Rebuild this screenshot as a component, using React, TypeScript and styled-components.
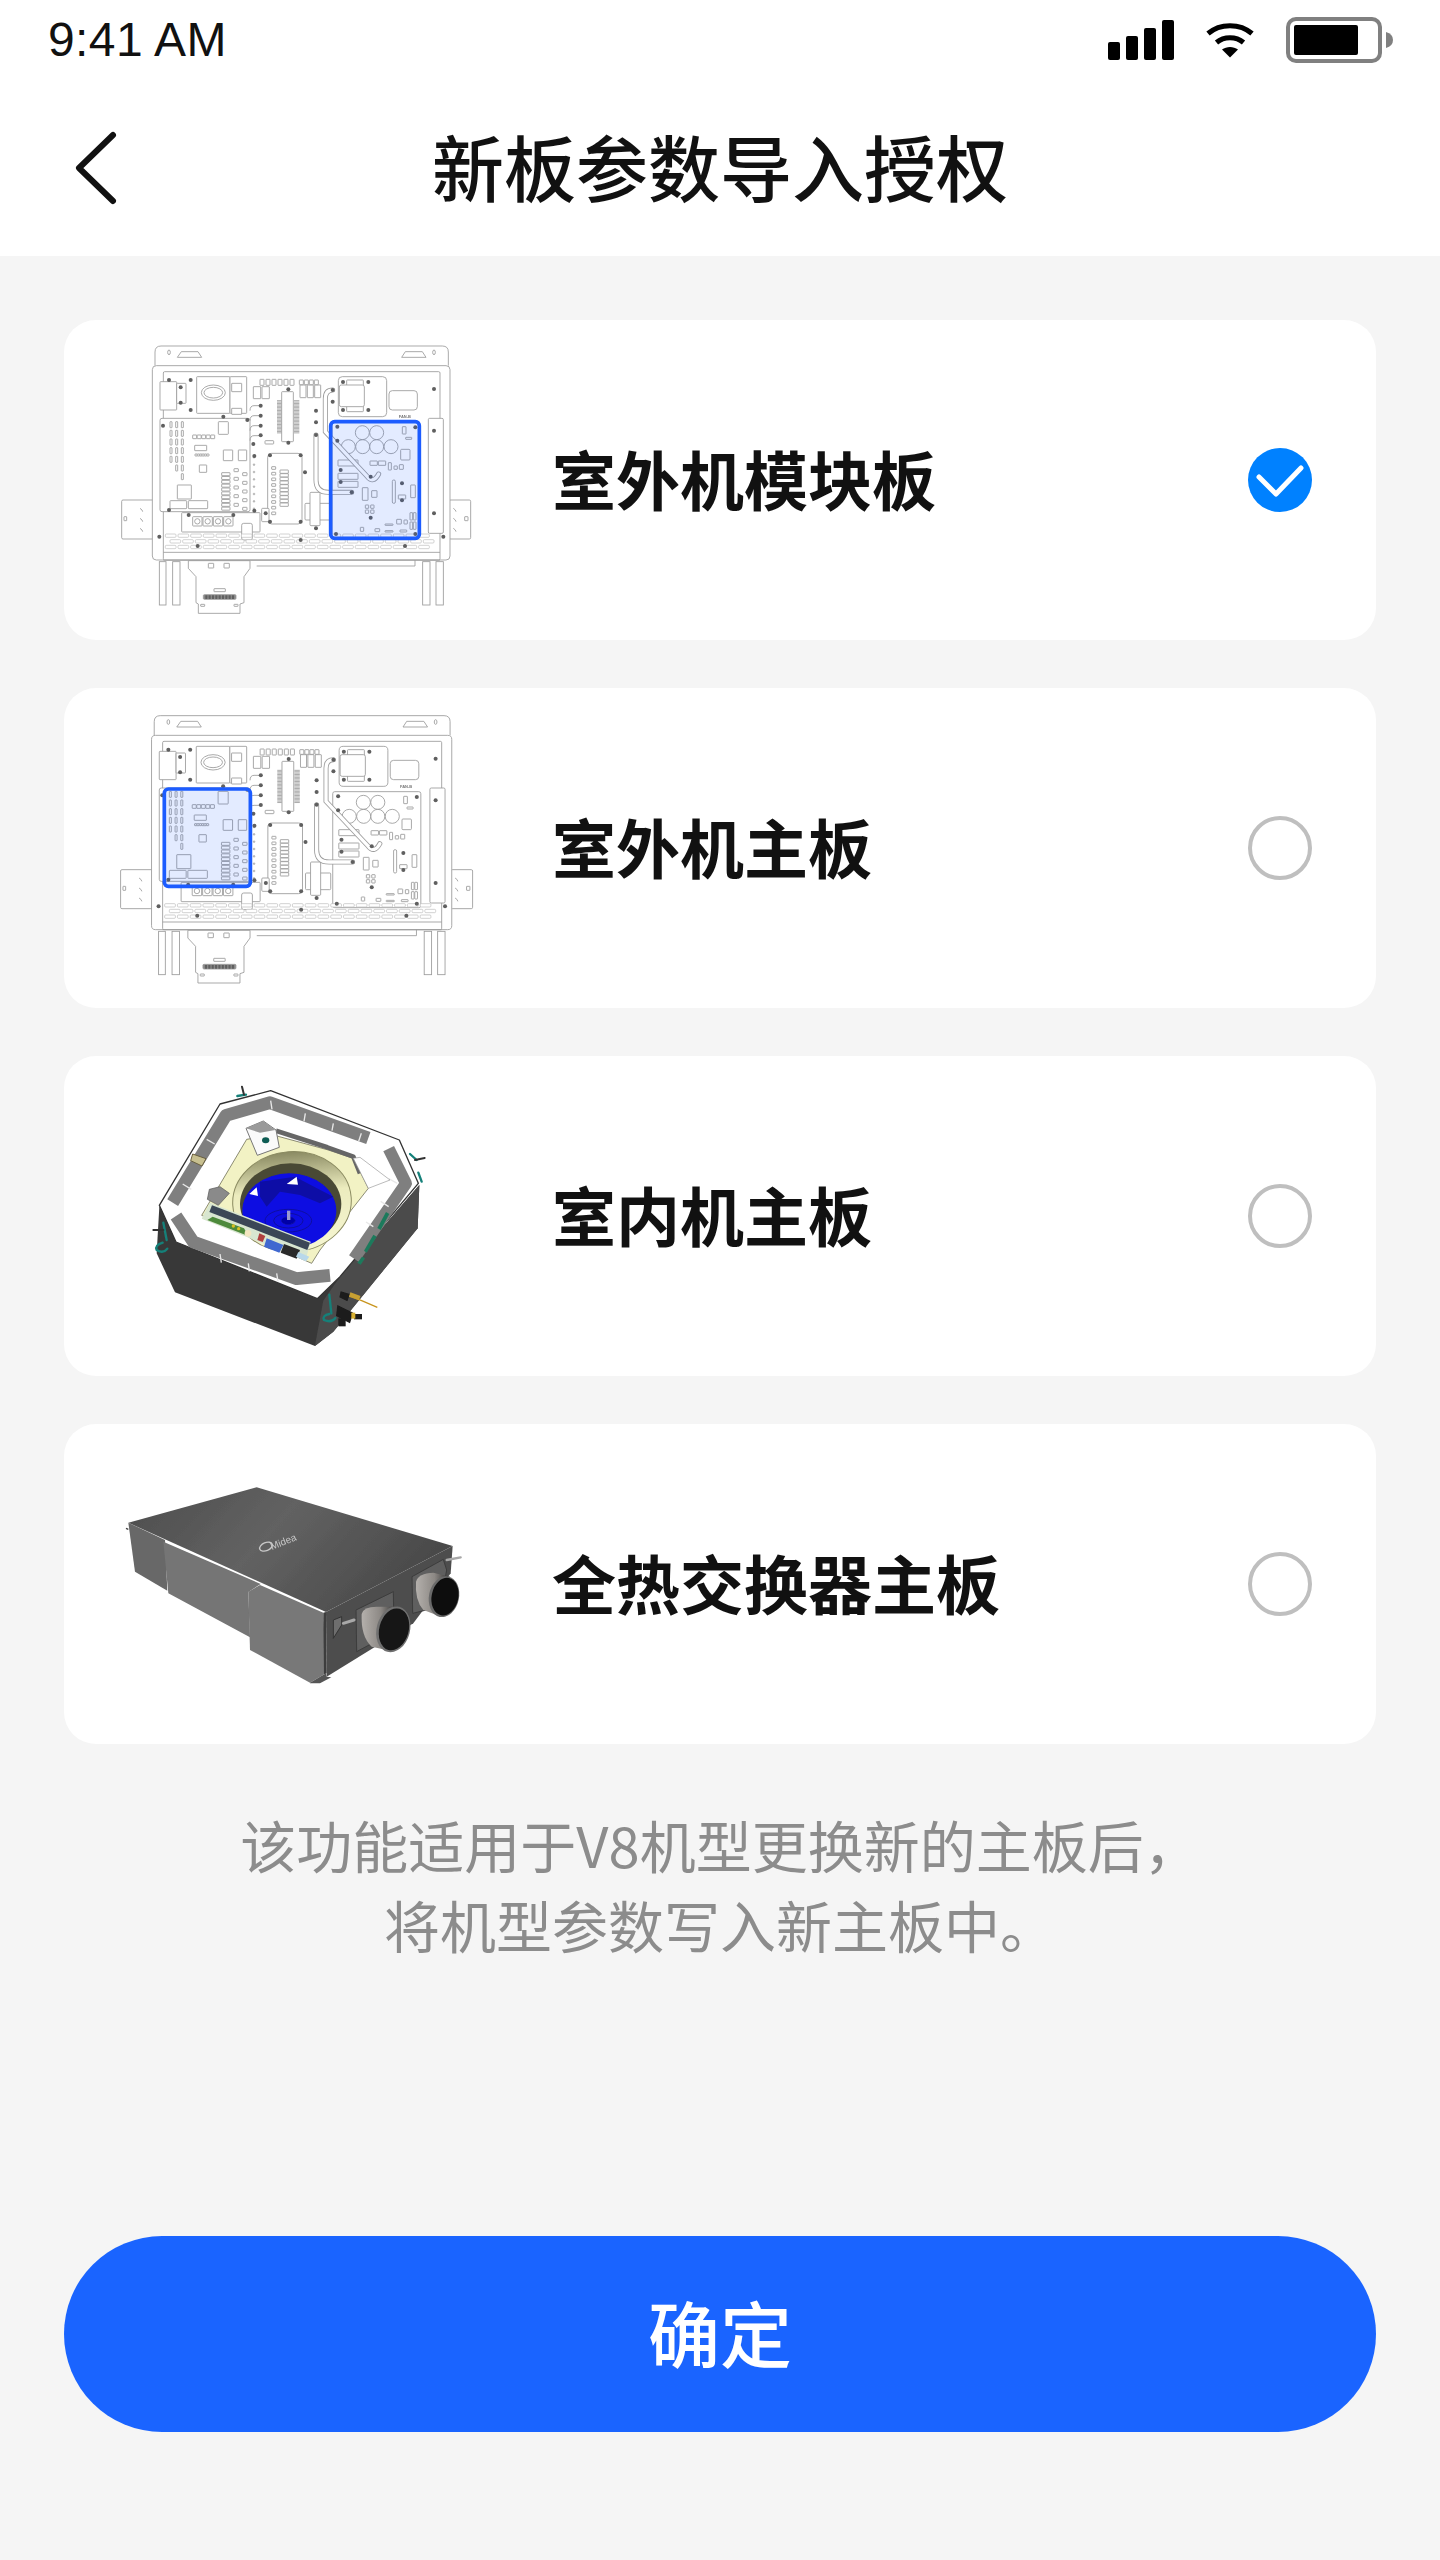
import React from 'react';
import styled, { createGlobalStyle } from 'styled-components';

const CJK = `"Noto Sans CJK SC", "Noto Sans", sans-serif`;

const GlobalStyle = createGlobalStyle`
  html, body {
    margin: 0;
    padding: 0;
    background: #f5f5f5;
  }
  * {
    box-sizing: border-box;
  }
`;

const Page = styled.div`
  width: 1440px;
  min-height: 2560px;
  background: #f5f5f5;
  font-family: ${CJK};
  display: flex;
  flex-direction: column;
`;

const Header = styled.header`
  height: 256px;
  background: #fff;
  display: flex;
  flex-direction: column;
`;

const StatusBar = styled.div`
  height: 80px;
  padding: 0 47px 0 48px;
  display: flex;
  align-items: center;
  justify-content: space-between;
`;

const Time = styled.span`
  font-family: "Liberation Sans", Arial, sans-serif;
  font-size: 48px;
  line-height: 82px;
  letter-spacing: 0.4px;
  color: #111;
`;

const NavBar = styled.div`
  flex: 1;
  display: grid;
  grid-template-columns: 1fr auto 1fr;
  align-items: center;
  padding: 0 72px;
`;

const Title = styled.h1`
  margin: 0 0 6px;
  font-size: 72px;
  line-height: 96px;
  font-weight: 500;
  color: #111;
`;

const Main = styled.main`
  padding: 64px 64px 0;
  display: flex;
  flex-direction: column;
`;

const CardList = styled.div`
  display: flex;
  flex-direction: column;
  gap: 48px;
`;

const Card = styled.div`
  height: 320px;
  background: #fff;
  border-radius: 32px;
  padding: 0 64px 0 26px;
  display: flex;
  align-items: center;
`;

const Picture = styled.svg`
  width: 420px;
  height: 320px;
  flex-shrink: 0;
  display: block;
`;

const CardLabel = styled.div`
  flex: 1;
  margin: 0 0 6px 42px;
  font-size: 64px;
  line-height: 90px;
  font-weight: 600;
  color: #111;
`;

const Radio = styled.div<{ $checked?: boolean }>`
  width: 64px;
  height: 64px;
  border-radius: 50%;
  flex-shrink: 0;
  background: ${({ $checked }) => ($checked ? '#0081ff' : '#fff')};
  border: ${({ $checked }) => ($checked ? 'none' : '4px solid #bfbfbf')};
`;

const CheckMark = styled.svg`
  width: 64px;
  height: 64px;
  display: block;
`;

const Note = styled.p`
  margin: 60px 0 0;
  font-size: 56px;
  line-height: 80px;
  color: #8c8c8c;
  text-align: center;
`;

const ConfirmButton = styled.button`
  margin-top: 272px;
  height: 196px;
  padding: 0 0 8px;
  border: none;
  border-radius: 98px;
  background: #1a64ff;
  color: #fff;
  font-family: ${CJK};
  font-size: 72px;
  font-weight: 500;
`;

type Box = [number, number, number, number, number?];

const range = (n: number) => Array.from({ length: n }, (_, i) => i);

const column = (x: number, y: number, w: number, h: number, count: number, step: number): Box[] =>
  range(count).map((i) => [x, y + i * step, w, h, 1]);

const row = (x: number, y: number, w: number, h: number, count: number, step: number): Box[] =>
  range(count).map((i) => [x + i * step, y, w, h, 1]);

const Boxes = ({ items }: { items: Box[] }) => (
  <>
    {items.map(([x, y, w, h, r], i) => (
      <rect key={i} x={x} y={y} width={w} height={h} rx={r ?? 1} />
    ))}
  </>
);

const frameBoxes: Box[] = [
  [95, 540, 96, 117, 4],
  [1078, 540, 64, 117, 4],
  [187, 137, 893, 583, 12],
  [220, 155, 830, 565, 4],
  [208, 725, 20, 130, 0],
  [248, 725, 22, 130, 0],
  [998, 725, 22, 130, 0],
  [1038, 725, 22, 130, 0],
  [1015, 295, 45, 345, 4],
  [745, 170, 145, 120, 12],
  [770, 180, 50, 95, 2],
  [748, 195, 75, 65, 6],
  [897, 212, 85, 58, 10],
  [320, 170, 100, 110, 2],
  [420, 170, 50, 110, 2],
  [425, 190, 30, 25, 1],
  [425, 265, 30, 18, 1],
  [210, 185, 50, 85, 2],
  [260, 190, 28, 60, 2],
  [575, 215, 35, 150, 2],
  [490, 200, 22, 36, 1],
  [516, 200, 22, 36, 1],
  [630, 195, 18, 38, 1],
  [652, 195, 18, 38, 1],
  [674, 195, 18, 38, 1],
  [525, 362, 26, 10, 2],
  [533, 400, 103, 212, 12],
  [645, 550, 75, 50, 3],
  [660, 517, 30, 100, 3],
  [515, 565, 22, 40, 3],
  [275, 578, 235, 58, 2],
  [455, 610, 32, 50, 6],
  [210, 295, 270, 280, 6],
  [262, 495, 42, 42, 1],
  [328, 435, 22, 22, 1],
  [400, 390, 28, 32, 1],
  [445, 390, 25, 32, 1],
  [385, 305, 30, 38, 2],
  [314, 376, 36, 16, 1],
  [240, 542, 50, 24, 2],
  [295, 542, 58, 24, 2],
  [726, 306, 262, 348, 6],
];

const smallBoxes: Box[] = [
  ...row(510, 178, 12, 18, 6, 18),
  ...row(628, 180, 12, 14, 4, 15),
  ...row(308, 345, 12, 11, 5, 13.5),
  ...row(315, 402, 7, 6, 6, 7),
  ...column(240, 305, 6, 18, 5, 26),
  ...column(257, 305, 6, 18, 6, 26),
  ...column(274, 305, 6, 18, 7, 26),
  ...column(395, 458, 25, 9, 10, 11.5),
  ...column(432, 446, 13, 9, 5, 26),
  ...column(458, 458, 13, 9, 5, 26),
  ...column(570, 450, 25, 10, 10, 11),
  ...column(545, 440, 12, 8, 9, 17),
  ...column(490, 410, 4, 4, 8, 22),
  ...column(102, 590, 8, 12, 1, 1),
  ...column(1124, 590, 10, 12, 1, 1),
  [840, 423, 22, 13, 1],
  [865, 423, 22, 13, 1],
  [895, 428, 9, 22, 1],
  [912, 438, 10, 10, 1],
  [928, 434, 12, 14, 1],
  [937, 320, 11, 22, 1],
  [947, 352, 18, 6, 1],
  [932, 388, 28, 32, 3],
  [962, 495, 14, 38, 1],
  [907, 480, 9, 70, 4],
  [925, 525, 22, 12, 1],
  [817, 503, 17, 38, 1],
  [845, 512, 16, 20, 1],
  [826, 555, 10, 10, 1],
  [842, 555, 10, 10, 1],
  [826, 570, 10, 10, 1],
  [842, 570, 10, 10, 1],
  [920, 598, 14, 14, 1],
  [942, 600, 10, 12, 1],
  [960, 578, 8, 22, 1],
  [970, 578, 8, 22, 1],
  [960, 606, 8, 22, 1],
  [970, 606, 8, 22, 1],
  [885, 612, 24, 4, 1],
  [885, 632, 24, 4, 1],
  [930, 630, 20, 6, 1],
  [811, 622, 10, 12, 1],
  [855, 626, 14, 9, 1],
  [744, 420, 60, 18, 1],
  [744, 460, 60, 18, 1],
  [744, 484, 60, 18, 1],
  [372, 806, 34, 9, 1],
  [355, 730, 16, 14, 1],
  [402, 730, 16, 14, 1],
  [332, 853, 12, 6, 1],
  [432, 853, 12, 6, 1],
];

const louvres: Box[] = range(3).flatMap((r) =>
  range(21).map((i): Box => [226 + i * 38 + (r === 1 ? 14 : 0), 642 + r * 17, 32, 10, 3]),
);

const screws: [number, number][] = [
  [237, 180], [272, 202], [272, 248], [302, 180], [302, 270], [512, 257], [512, 287], [512, 317], [512, 346],
  [595, 208], [595, 368], [678, 272], [678, 307], [678, 345], [728, 210], [728, 245], [759, 186], [835, 186],
  [759, 270], [835, 270], [1032, 207], [1032, 332], [1032, 580], [219, 317], [472, 300], [237, 570], [490, 372],
  [493, 408], [493, 572], [540, 406], [632, 406], [645, 457], [527, 580], [540, 605], [632, 605], [678, 625],
  [742, 320], [742, 362], [976, 322], [738, 642], [976, 642], [842, 470], [752, 450], [752, 486], [785, 517],
  [936, 490], [936, 541], [842, 593], [208, 650], [1060, 650], [323, 678], [632, 660], [945, 678], [296, 585],
  [430, 585], [400, 290],
];

const BoardPicture = ({ side }: { side: 'left' | 'right' }) => {
  const isLeft = side === 'left';
  return (
    <Picture viewBox="0 0 1260 960" aria-hidden>
      <defs>
        <filter id={`soft-${side}`}>
          <feGaussianBlur stdDeviation="0.8" />
        </filter>
      </defs>
      <g transform={isLeft ? 'translate(-4 5) scale(1.0086 1)' : undefined} filter={`url(#soft-${side})`}>
        <g fill="#fff" stroke="#9c9c9c" strokeWidth="2.6">
          <path d="M195 137V96Q195 78 213 78H1057Q1075 78 1075 96V137" />
          <path d="M262 112L274 95H324L335 112ZM935 112L946 95H997L1008 112Z" />
          <ellipse cx="237" cy="97" rx="4" ry="7" />
          <ellipse cx="1032" cy="97" rx="4" ry="7" />
          <Boxes items={frameBoxes} />
          <path d="M295 722H480V745L462 770V848L450 852V880H325V852L318 848V770L295 745Z" />
          <rect x="340" y="824" width="98" height="14" rx="3" fill="#888" />
          <g stroke="#bcbcbc" strokeWidth="2">
            <Boxes items={louvres} />
          </g>
          <Boxes items={smallBoxes} />
          <path d="M220 697H1050M220 720H1050M500 738H975V720" fill="none" />
          <path d="M150 565Q158 570 158 575M150 595Q158 600 158 605M150 625Q158 630 158 635M1090 565Q1098 570 1098 575M1090 595Q1098 600 1098 605M1090 625Q1098 630 1098 635" fill="none" />
        </g>
        <g fill="none" stroke="#9c9c9c" strokeWidth="2.6">
          <ellipse cx="370" cy="218" rx="36" ry="23" />
          <ellipse cx="370" cy="218" rx="28" ry="16" />
          {[[817, 338], [860, 338], [775, 380], [818, 380], [860, 380], [903, 380]].map(([cx, cy]) => (
            <circle key={`${cx}-${cy}`} cx={cx} cy={cy} r="21" />
          ))}
          {[322, 353, 384, 415].map((cx) => (
            <g key={cx}>
              <rect x={cx - 14} y="590" width="28" height="28" rx="2" />
              <circle cx={cx} cy="604" r="8" />
            </g>
          ))}
          {range(4).map((i) => (
            <path key={i} d={`M512 ${257 + i * 30}H492Q480 ${257 + i * 30} 480 ${272 + i * 30}`} />
          ))}
        </g>
        <g stroke="#808080" strokeWidth="2">
          {range(24).map((i) => (
            <path key={i} d={`M561 ${242 + i * 4.2}H574M612 ${242 + i * 4.2}H628`} />
          ))}
        </g>
        <g fill="none" stroke="#9c9c9c" strokeWidth="15" strokeLinecap="round">
          <path d="M728 210Q706 210 706 236V335L832 470Q850 492 866 462" />
          <path d="M678 345V480Q678 517 715 517H785" />
        </g>
        <g fill="none" stroke="#fff" strokeWidth="10" strokeLinecap="round">
          <path d="M728 210Q706 210 706 236V335L832 470Q850 492 866 462" />
          <path d="M678 345V480Q678 517 715 517H785" />
        </g>
        <g fill="#5e5e5e">
          {screws.map(([cx, cy]) => (
            <circle key={`${cx}-${cy}`} cx={cx} cy={cy} r="6" />
          ))}
          {range(9).map((i) => (
            <rect key={i} x={346 + i * 10} y="826" width="6" height="11" />
          ))}
        </g>
        <text x="926" y="295" fontFamily="Liberation Sans, sans-serif" fontSize="12" fontWeight="700" fill="#777">
          FAN-B
        </text>
        {isLeft ? (
          <rect x="225" y="298" width="256" height="292" rx="12" fill="#1a5cff" fillOpacity="0.12" stroke="#1a5cff" strokeWidth="11" />
        ) : (
          <rect x="722" y="305" width="266" height="350" rx="12" fill="#1a5cff" fillOpacity="0.12" stroke="#1a5cff" strokeWidth="11" />
        )}
      </g>
    </Picture>
  );
};

const CassettePicture = () => (
  <Picture viewBox="0 0 1260 960" aria-hidden>
    <defs>
      <filter id="soft-cassette">
        <feGaussianBlur stdDeviation="1.3" />
      </filter>
      <linearGradient id="well" x1="0" y1="0" x2="0" y2="1">
        <stop offset="0" stopColor="#8a8a62" />
        <stop offset="0.4" stopColor="#ececbe" />
        <stop offset="1" stopColor="#f6f6d2" />
      </linearGradient>
    </defs>
    <g transform="translate(90 12)" filter="url(#soft-cassette)">
      <path d="M118 440L110 580L165 697L585 858L640 815L893 505L898 375L660 650L590 715Z" fill="#393939" />
      <path d="M610 722L660 650L898 375L893 505L640 815L585 858Z" fill="#4c4c4c" />
      <path d="M118 436L300 132L452 92L838 240L895 370L660 650L592 716L168 546Z" fill="#fff" stroke="#333" strokeWidth="4" strokeLinejoin="round" />
      <g fill="none" stroke="#7f7f7f" strokeLinejoin="round">
        <path d="M158 428L318 166L450 128L745 234" strokeWidth="38" />
        <path d="M806 266L858 370L702 596" strokeWidth="36" />
        <path d="M168 468L220 546L530 656L630 646" strokeWidth="38" />
      </g>
      <g stroke="#e8e8e8" strokeWidth="4">
        <path d="M188 372L214 388M260 238L284 252M452 122L456 148M556 160L552 184M640 190L636 212M724 220L716 244M832 370L806 356M806 440L782 424M760 500L738 486M300 582L304 608M385 610L388 634M470 640L474 664" />
      </g>
      <path d="M245 466L380 238L460 225L625 270L700 295L745 385L600 570L575 610Z" fill="#f2f2c4" stroke="#55553c" strokeWidth="2" />
      <path d="M468 212L622 262L700 290L720 340" fill="none" stroke="#666" strokeWidth="14" strokeLinejoin="round" />
      <path d="M378 205L430 183L468 210L478 262L412 286Z" fill="#fafafa" stroke="#777" strokeWidth="3" />
      <path d="M378 205L430 183L466 210L420 218Z" fill="#9a9a9a" />
      <ellipse cx="437" cy="241" rx="11" ry="9" fill="#0d5b52" />
      <path d="M720 292L810 360L745 385L700 295Z" fill="#fff" stroke="#999" strokeWidth="2" />
      <ellipse cx="516" cy="425" rx="178" ry="150" transform="rotate(-4 516 425)" fill="url(#well)" stroke="#8a8a60" strokeWidth="3" />
      <ellipse cx="512" cy="432" rx="152" ry="122" fill="#4a4a34" />
      <ellipse cx="508" cy="452" rx="141" ry="112" fill="#0c0ce2" />
      <path d="M420 365L525 350L640 410L600 430L540 405L480 395L440 440L420 410Z" fill="#0a0aa6" />
      <path d="M500 372L530 350L534 374ZM388 402L410 382L414 408Z" fill="#fff" />
      <g fill="none" stroke="#0808a0" strokeWidth="3">
        <ellipse cx="505" cy="482" rx="70" ry="34" />
        <ellipse cx="505" cy="482" rx="44" ry="22" />
        <ellipse cx="505" cy="482" rx="20" ry="11" fill="#0606a8" />
      </g>
      <rect x="501" y="452" width="10" height="28" fill="#9a9ad0" />
      <path d="M270 428L572 545L556 602L245 476Z" fill="#d8e6d0" />
      <path d="M276 436L570 548L562 570L268 456Z" fill="#3a4757" />
      <path d="M278 470L372 505L385 528L262 480Z" fill="#4e8a3a" />
      <circle cx="384" cy="520" r="10" fill="#f2e6c0" />
      <circle cx="340" cy="498" r="5" fill="#d8c020" />
      <circle cx="356" cy="506" r="5" fill="#d8c020" />
      <path d="M440 535L490 555L478 578L432 560Z" fill="#3f68d0" />
      <path d="M492 552L540 570L530 596L482 578Z" fill="#2a2a2a" />
      <path d="M418 520L436 528L428 546L412 540Z" fill="#b04040" />
      <path d="M535 576L568 590L558 604L528 590Z" fill="#b8d8ea" />
      <path d="M268 388L300 380L328 400L295 436L262 418Z" fill="#8a8a8a" stroke="#555" strokeWidth="2" />
      <g fill="#1f7a5c">
        <path d="M808 462L782 510L772 504L798 456Z" />
        <path d="M770 530L740 578L732 572L760 524Z" />
        <path d="M735 595L722 614L712 608L726 590Z" />
      </g>
      <path d="M218 282L258 296L246 318L212 302Z" fill="#c8c090" stroke="#6a6040" strokeWidth="3" />
      <g fill="none" stroke="#138079" strokeWidth="7" strokeLinecap="round">
        <path d="M128 548Q104 556 110 570Q130 582 142 566" />
        <path d="M130 488L140 540" />
        <path d="M628 762Q606 766 612 780Q634 790 646 774" />
        <path d="M628 704L634 760" />
        <path d="M352 108L378 104" />
        <path d="M870 282L890 300" />
        <path d="M895 338L905 365" />
      </g>
      <path d="M366 80L372 104M100 510H130M885 300L914 294" stroke="#333" strokeWidth="6" strokeLinecap="round" />
      <g fill="#1b1b1b">
        <path d="M662 694L690 702L682 724L658 712Z" />
        <path d="M652 735L700 758L690 790L648 768Z" />
        <rect x="655" y="775" width="22" height="24" />
        <rect x="702" y="762" width="24" height="16" />
      </g>
      <path d="M690 708L725 722L772 742" stroke="#c8941c" strokeWidth="4" fill="none" />
      <rect x="688" y="702" width="32" height="14" transform="rotate(20 704 709)" fill="#c8a030" />
      <rect x="694" y="758" width="12" height="18" fill="#d8b030" />
    </g>
  </Picture>
);

const ExchangerPicture = () => (
  <Picture viewBox="0 0 1260 960" aria-hidden>
    <defs>
      <filter id="soft-exchanger">
        <feGaussianBlur stdDeviation="2" />
      </filter>
      <linearGradient id="lid" x1="0" y1="0" x2="1" y2="0.35">
        <stop offset="0" stopColor="#4c4c4c" />
        <stop offset="0.5" stopColor="#626262" />
        <stop offset="1" stopColor="#4a4a4a" />
      </linearGradient>
      <linearGradient id="collar" x1="0" y1="0" x2="1" y2="0">
        <stop offset="0" stopColor="#b4b0ac" />
        <stop offset="0.55" stopColor="#8c8884" />
        <stop offset="1" stopColor="#2c2c2c" />
      </linearGradient>
    </defs>
    <g transform="translate(30 108)" filter="url(#soft-exchanger)">
      <path d="M678 456L1058 258L1052 340L940 490L680 650Z" fill="#4d4d4d" />
      <path d="M85 188L195 240L202 392L105 335Z" fill="#686868" />
      <path d="M190 245L482 372L445 396L450 532L205 400Z" fill="#747474" />
      <path d="M445 395L480 375L670 458L678 640L630 668L450 570Z" fill="#787878" />
      <path d="M630 668L678 640L680 650L694 652L660 670L630 670Z" fill="#555" />
      <path d="M85 188L470 82L1058 258L678 456Z" fill="url(#lid)" />
      <path d="M670 458L678 456L680 640L672 642Z" fill="#3c3c3c" />
      <text
        x="0"
        y="0"
        transform="translate(516 270) rotate(-22)"
        fontFamily="Liberation Sans, sans-serif"
        fontSize="30"
        fill="#c8c8c8"
      >
        Midea
      </text>
      <ellipse cx="498" cy="260" rx="20" ry="12" transform="rotate(-22 498 260)" fill="none" stroke="#c8c8c8" strokeWidth="4" />
      <path d="M768 450L880 395L882 515L770 575Z" fill="#5e5e5e" stroke="#3c3c3c" strokeWidth="3" />
      <path d="M936 350L1030 298L1040 330L1020 440L938 460Z" fill="#5e5e5e" stroke="#3c3c3c" strokeWidth="3" />
      <path d="M785 462Q790 440 830 440L890 440L860 570L815 560Q782 530 785 462Z" fill="url(#collar)" />
      <ellipse cx="880" cy="508" rx="50" ry="70" transform="rotate(15 880 508)" fill="#6f6f6f" />
      <ellipse cx="882" cy="508" rx="44" ry="64" transform="rotate(15 882 508)" fill="#141414" />
      <path d="M948 365Q955 340 1000 338L1050 350L1010 465L970 450Q944 420 948 365Z" fill="url(#collar)" />
      <ellipse cx="1032" cy="410" rx="45" ry="62" transform="rotate(12 1032 410)" fill="#6a6a6a" />
      <ellipse cx="1035" cy="410" rx="40" ry="57" transform="rotate(12 1035 410)" fill="#0e0e0e" />
      <path d="M700 480L725 470L725 495L700 535Z" fill="#6e6e6e" stroke="#333" strokeWidth="3" />
      <path d="M730 490L762 480" stroke="#a8a8a8" strokeWidth="9" strokeLinecap="round" />
      <path d="M1040 300L1082 292" stroke="#a8a8a8" strokeWidth="7" strokeLinecap="round" />
      <path d="M78 205L85 208" stroke="#444" strokeWidth="4" />
    </g>
  </Picture>
);

const SignalIcon = () => (
  <svg width="66" height="40" viewBox="0 0 66 40" aria-hidden>
    <rect x="0" y="22" width="12" height="18" rx="2" />
    <rect x="18" y="16" width="12" height="24" rx="2" />
    <rect x="36" y="8" width="12" height="32" rx="2" />
    <rect x="54" y="0" width="12" height="40" rx="2" />
  </svg>
);

const WifiIcon = () => (
  <svg width="48" height="36" viewBox="0 0 48 36" aria-hidden>
    <path d="M2 11.5C14 1 34 1 46 11.5" fill="none" stroke="#000" strokeWidth="5" />
    <path d="M10.5 20.5C18 14 30 14 37.5 20.5" fill="none" stroke="#000" strokeWidth="5" />
    <path d="M16 27.5C20.5 24 27.5 24 32 27.5L24 35.5Z" />
  </svg>
);

const BatteryIcon = () => (
  <svg width="107" height="46" viewBox="0 0 107 46" aria-hidden>
    <rect x="2" y="2" width="92" height="42" rx="8" fill="none" stroke="#808080" strokeWidth="4" />
    <rect x="8" y="8" width="64" height="30" rx="2" />
    <path d="M100 15Q107 17 107 23Q107 29 100 31Z" fill="#808080" />
  </svg>
);

const StatusIcons = styled.div`
  display: flex;
  align-items: center;
  gap: 32px;
`;

const boards = [
  { label: '室外机模块板', picture: <BoardPicture side="right" />, checked: true },
  { label: '室外机主板', picture: <BoardPicture side="left" /> },
  { label: '室内机主板', picture: <CassettePicture /> },
  { label: '全热交换器主板', picture: <ExchangerPicture /> },
];

export default function App() {
  return (
    <Page>
      <GlobalStyle />
      <Header>
        <StatusBar>
          <Time>9:41 AM</Time>
          <StatusIcons>
            <SignalIcon />
            <WifiIcon />
            <BatteryIcon />
          </StatusIcons>
        </StatusBar>
        <NavBar>
          <svg width="48" height="80" viewBox="0 0 48 80" aria-hidden>
            <path d="M41 7L7 40L41 73" fill="none" stroke="#111" strokeWidth="6" strokeLinecap="round" strokeLinejoin="round" />
          </svg>
          <Title>新板参数导入授权</Title>
          <span />
        </NavBar>
      </Header>
      <Main>
        <CardList>
          {boards.map((board) => (
            <Card key={board.label}>
              {board.picture}
              <CardLabel>{board.label}</CardLabel>
              <Radio $checked={board.checked}>
                {board.checked && (
                  <CheckMark viewBox="0 0 64 64" aria-hidden>
                    <path d="M11 29L28 46L53 20" fill="none" stroke="#fff" strokeWidth="5" strokeLinecap="round" strokeLinejoin="round" />
                  </CheckMark>
                )}
              </Radio>
            </Card>
          ))}
        </CardList>
        <Note>
          该功能适用于V8机型更换新的主板后，
          <br />
          将机型参数写入新主板中。
        </Note>
        <ConfirmButton>确定</ConfirmButton>
      </Main>
    </Page>
  );
}
